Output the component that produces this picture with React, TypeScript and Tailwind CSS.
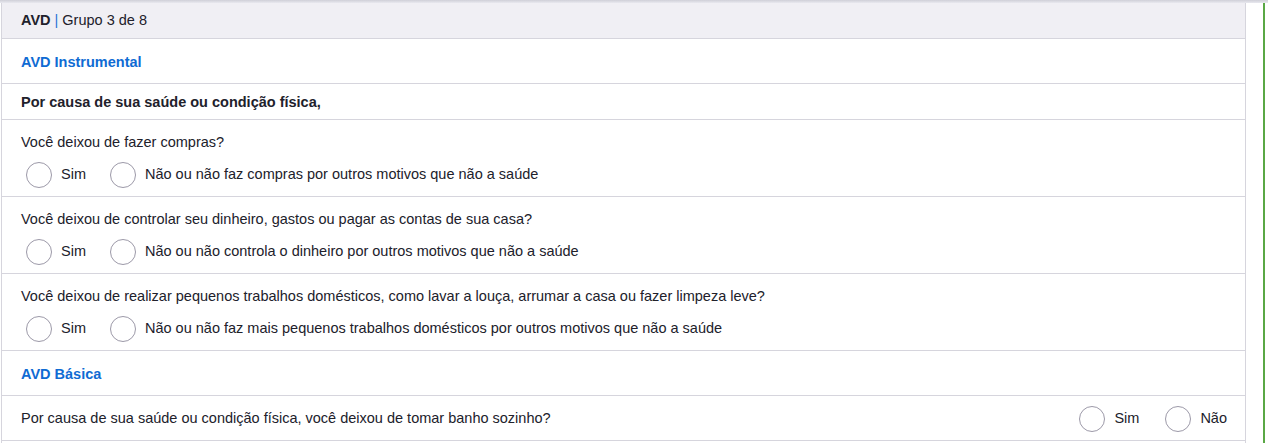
import React from 'react';

type Question = {
  text: string;
  options: string[];
};

const questions: Question[] = [
  {
    text: 'Você deixou de fazer compras?',
    options: ['Sim', 'Não ou não faz compras por outros motivos que não a saúde'],
  },
  {
    text: 'Você deixou de controlar seu dinheiro, gastos ou pagar as contas de sua casa?',
    options: ['Sim', 'Não ou não controla o dinheiro por outros motivos que não a saúde'],
  },
  {
    text: 'Você deixou de realizar pequenos trabalhos domésticos, como lavar a louça, arrumar a casa ou fazer limpeza leve?',
    options: ['Sim', 'Não ou não faz mais pequenos trabalhos domésticos por outros motivos que não a saúde'],
  },
];

const Radio: React.FC<{ label: string }> = ({ label }) => (
  <label className="flex items-center gap-[9px] cursor-pointer">
    <span className="w-[26px] h-[26px] rounded-full border border-[#9c99a8] bg-white shrink-0" />
    <span>{label}</span>
  </label>
);

const App: React.FC = () => {
  return (
    <div
      className="w-[1268px] h-[443px] overflow-hidden bg-white text-[14.5px] text-[#21212b]"
      style={{ fontFamily: '"Liberation Sans", Arial, sans-serif' }}
    >
      {/* faixa de sombra do conteúdo acima */}
      <div className="h-[3px] bg-gradient-to-b from-[#cfcfd8] to-[#e9e9ef]" />

      <div className="flex">
        <div className="w-[1245px] ml-[1px] border-x border-[#d6d5dd]">
          {/* cabeçalho */}
          <div className="h-[36px] bg-[#f0eff4] border-b border-[#d6d5dd] flex items-center px-[19px] pt-[1px]">
            <span className="font-bold">AVD</span>
            <span className="mx-[4px] text-[#2b6fd6]">|</span>
            <span>Grupo 3 de 8</span>
          </div>

          {/* AVD Instrumental */}
          <div className="h-[45px] border-b border-[#d6d5dd] flex items-center px-[19px] pt-[3px] font-bold text-[#0f6bd3]">
            AVD Instrumental
          </div>

          <div className="h-[36px] border-b border-[#d6d5dd] flex items-center px-[19px] pt-[2px] font-bold">
            Por causa de sua saúde ou condição física,
          </div>

          {questions.map((q) => (
            <div key={q.text} className="h-[77px] border-b border-[#d6d5dd] px-[19px] pt-[12px]">
              <div className="leading-[20px]">{q.text}</div>
              <div className="flex items-center gap-[24px] mt-[10px] pl-[5px]">
                {q.options.map((o) => (
                  <Radio key={o} label={o} />
                ))}
              </div>
            </div>
          ))}

          {/* AVD Básica */}
          <div className="h-[45px] border-b border-[#d6d5dd] flex items-center px-[19px] pt-[3px] font-bold text-[#0f6bd3]">
            AVD Básica
          </div>

          <div className="h-[45px] border-b border-[#d6d5dd] flex items-center justify-between pl-[19px] pr-[18px] pt-[2px]">
            <span>Por causa de sua saúde ou condição física, você deixou de tomar banho sozinho?</span>
            <div className="flex items-center gap-[26px]">
              <Radio label="Sim" />
              <Radio label="Não" />
            </div>
          </div>
        </div>

        <div className="ml-[17px] w-[2px] h-[440px] bg-[#5aa845]" />
      </div>
    </div>
  );
};

export default App;
